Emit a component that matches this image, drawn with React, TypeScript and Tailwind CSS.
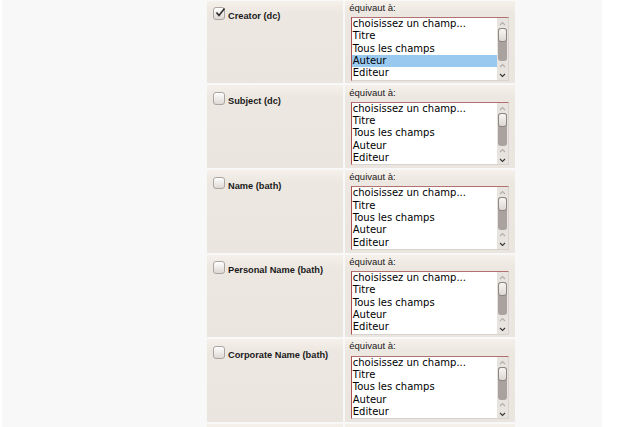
import React from 'react';

const fields = [
  { label: 'Creator (dc)', checked: true, selected: 'Auteur' },
  { label: 'Subject (dc)', checked: false, selected: '' },
  { label: 'Name (bath)', checked: false, selected: '' },
  { label: 'Personal Name (bath)', checked: false, selected: '' },
  { label: 'Corporate Name (bath)', checked: false, selected: '' },
];

const options = ['choisissez un champ...', 'Titre', 'Tous les champs', 'Auteur', 'Editeur'];

const cellBg = 'bg-gradient-to-b from-[#f5f0ea] via-[#ede7e1] via-[15%] to-[#ebe5df]';

function Chevron({ down, dark }: { down?: boolean; dark?: boolean }) {
  return (
    <svg width="7" height="5" viewBox="0 0 7 5" className="block">
      <path
        d={down ? 'M1 1 L3.5 3.5 L6 1' : 'M1 4 L3.5 1.5 L6 4'}
        fill="none"
        stroke={dark ? '#3a3634' : '#b4aeaa'}
        strokeWidth="1.1"
      />
    </svg>
  );
}

function Checkbox({ checked }: { checked: boolean }) {
  return (
    <span className="relative flex h-[12.5px] w-[12.5px] shrink-0 items-center justify-center rounded-[3px] border border-[#aaa5a0] bg-gradient-to-b from-[#ffffff] to-[#ddd8d3] shadow-[inset_0_1px_0_#fff]">
      {checked && (
        <svg width="11" height="11" viewBox="0 0 11 11" className="absolute -top-[1px] left-[1px]">
          <path d="M1.5 5.5 L4 8.5 L9.5 1.5" fill="none" stroke="#2d2b2a" strokeWidth="1.6" />
        </svg>
      )}
    </span>
  );
}

function ListBox({ selected }: { selected: string }) {
  return (
    <div className="ml-[2px] flex h-[63.5px] w-[157.5px] border border-t-[#b27070] border-l-[#b04f4f] border-r-[#d9d3cf] border-b-[#d9d3cf] bg-white">
      <div className="min-w-0 flex-1 overflow-hidden font-['DejaVu_Sans',sans-serif] text-[10px] leading-[12.3px] text-black">
        {options.map((o) => (
          <div key={o} className={o === selected ? 'bg-[#99c9ef] pl-[0.5px]' : 'pl-[0.5px]'}>
            {o}
          </div>
        ))}
      </div>
      <div className="flex w-[11px] shrink-0 flex-col items-center bg-[#e7e3df]">
        <div className="mt-[3px]">
          <Chevron />
        </div>
        <div className="mt-[2px] flex h-[33px] w-[9px] flex-col rounded-[3px] bg-[#aaa29e]">
          <div className="h-[14px] w-[9px] rounded-[3px] border border-[#8d8581] bg-gradient-to-b from-[#f7f5f3] to-[#dcd7d3]" />
        </div>
        <div className="mt-[2px]">
          <Chevron />
        </div>
        <div className="mt-[5px]">
          <Chevron down dark />
        </div>
      </div>
    </div>
  );
}

export default function App() {
  return (
    <div className="h-[427px] overflow-hidden bg-white pl-[2px]">
      <div className="h-[427px] w-[600px] overflow-hidden bg-[#f8f8f8] pl-[204.7px] pt-[0.67px]">
        <div className="flex flex-col gap-[2px]">
          {fields.map((f, i) => (
            <div key={i} className="flex h-[82.67px] shrink-0 gap-[2px]">
              <div className={`flex w-[136.6px] items-start ${cellBg} pl-[6.3px] pt-[6.8px]`}>
                <Checkbox checked={f.checked} />
                <span className="ml-[2.5px] pt-[3px] font-['Liberation_Sans',Arial,sans-serif] text-[9.25px] font-bold leading-[12.5px] text-[#1a1a1a]">
                  {f.label}
                </span>
              </div>
              <div className={`flex w-[170px] flex-col ${cellBg} pl-[4px]`}>
                <span className="pt-[1.2px] font-['Liberation_Sans',Arial,sans-serif] text-[9.5px] leading-[11px] text-[#1a1a1a]">
                  équivaut à:
                </span>
                <div className="mt-[4.3px]">
                  <ListBox selected={f.selected} />
                </div>
              </div>
            </div>
          ))}
          {/* next row, only its top edge is in view */}
          <div className="flex h-[82.67px] shrink-0 gap-[2px]">
            <div className={`w-[136.6px] ${cellBg}`} />
            <div className={`w-[170px] ${cellBg}`} />
          </div>
        </div>
      </div>
    </div>
  );
}
